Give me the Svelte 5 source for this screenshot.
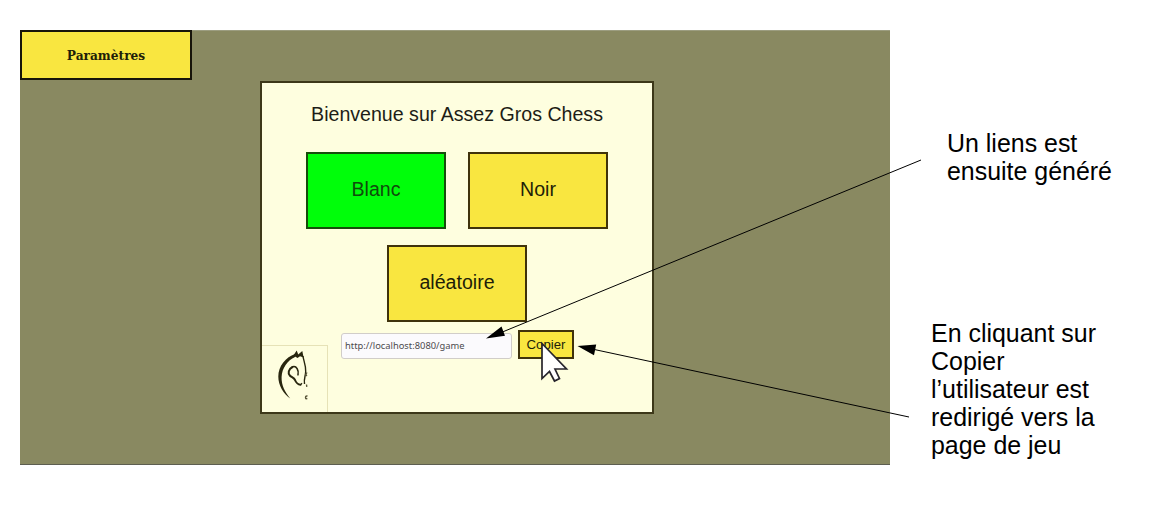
<script>
  let choice = $state('Blanc');
  const link = 'http://localhost:8080/game';
</script>

<main class="slide">
  <section class="screen">
    <button class="settings">Paramètres</button>
    <div class="dialog">
      <h1>Bienvenue sur Assez Gros Chess</h1>
      <div class="choices">
        {#each ['Blanc', 'Noir', 'aléatoire'] as name}
          <button class="choice" class:selected={choice === name} onclick={() => (choice = name)}>{name}</button>
        {/each}
      </div>
      <div class="share">
        <div class="link"><span>{link}</span></div>
        <button class="copy">Copier</button>
      </div>
      <div class="logo">
        <svg viewBox="0 0 66 66" width="66" height="66">
          <path d="M33 8C24 11 16.300 20 16.300 30.500c0 9 5 17 11.900 22C23 46 19.300 39.500 19.600 31 20 22 25.500 14.500 33 11z" fill="#28260f" />
          <path d="M30 11.500l4.700-7 1.500 4 4.100-3.500 1.300 6.500-3.600-1.300-2.500 1.800-2-1.300z" fill="#28260f" />
          <path d="M41 10c.3 4 3 9 2.700 15.500-.2 5-2 7-1.200 12.500" fill="none" stroke="#28260f" stroke-width="1.400" />
          <path d="M30.500 20.800c4-1.500 6.500 3.500 5.500 8" fill="none" stroke="#28260f" stroke-width="1.600" stroke-linecap="round" />
          <path d="M30.500 21c-4 2.200-5 6-2.500 8.700 1.500 1.600 4 2 5 4.300 1 2.500 2 4.500 5.500 4.700" fill="none" stroke="#28260f" stroke-width="2" stroke-linecap="round" />
          <path d="M38.500 38.800l1.500-1.600" stroke="#28260f" stroke-width="1.200" />
          <path d="M45 26.500l-1.200 2 1 1.500M44.500 38.500l.3 2.300M45.500 50c-2-.3-2.300 1.200-1.700 2.600l1.500.2" fill="none" stroke="#5a573b" stroke-width="1.400" />
        </svg>
      </div>
    </div>
  </section>
  <aside class="notes">
    <p class="first">Un liens est<br />ensuite généré</p>
    <p class="second">En cliquant sur<br />Copier<br />l’utilisateur est<br />redirigé vers la<br />page de jeu</p>
  </aside>
  <svg class="overlay" viewBox="0 0 1150 524" width="1150" height="524">
    <path d="M542 343.500V378.500L549.500 371.500 554.500 381 559.500 378.500 555 369H566.500Z" fill="#fff" stroke="#27252c" stroke-width="1.700" />
    <path d="M921 160L500 333M909 417L592 349" fill="none" stroke="#000" stroke-width="1" />
    <path d="M486 338.500L501.500 326.500 505 335.800ZM577.500 346L596.200 344.500 594 355.200Z" />
  </svg>
</main>

<style>
  :global(body) { background: #fff; }
  .slide {
    position: relative;
    display: flex;
    box-sizing: border-box;
    width: 1150px;
    height: 524px;
    padding-top: 30px;
    padding-left: 20px;
    overflow: hidden;
    font-family: "Liberation Sans", Arial, sans-serif;
  }
  button { font-family: inherit; color: #211e08; background: #f9e640; padding: 0; box-sizing: border-box; border: 2px solid #3f320b; border-radius: 0; }
  .screen {
    display: flex;
    align-items: flex-start;
    box-sizing: border-box;
    flex: none;
    width: 869.500px;
    height: 434.500px;
    background: #898961;
    border-top: 1px solid #9c9d80;
    border-bottom: 1.500px solid #5d5e50;
  }
  .settings { width: 172px; height: 50px; margin-top: -1px; padding-top: 1px; border-color: #17140a; font: bold 12.200px "DejaVu Serif", serif; }
  .dialog {
    display: grid;
    grid-template-columns: 66px 1fr 66px;
    grid-template-rows: 70px 177px 1fr;
    box-sizing: border-box;
    width: 394px;
    height: 333px;
    margin: 50px 0 0 68px;
    background: #fefedf;
    border: 2px solid #3d3819;
  }
  h1 { grid-column: 1 / 4; margin: 19px 0 0; font-size: 19.600px; line-height: 24px; font-weight: 400; text-align: center; color: #1d1d16; }
  .choices { grid-column: 1 / 4; display: flex; flex-wrap: wrap; justify-content: center; align-content: flex-start; gap: 16px 22px; margin-top: -1px; padding: 0 38px; }
  .choice { width: 140px; height: 77px; padding-bottom: 2px; font-size: 19.600px; }
  .choice.selected { background: #00fe0a; color: #104c0c; border-color: #174c0b; }
  .share { grid-column: 2 / 4; grid-row: 3; display: flex; align-items: flex-start; gap: 6px; padding-left: 13px; }
  .link { box-sizing: border-box; width: 171px; height: 26px; margin-top: 3px; padding: 0 0 2px 3px; display: flex; align-items: center; border: 1px solid #d1cdc9; border-radius: 3px; background: #fbfafd; font: 9.350px "Noto Sans", sans-serif; color: #4c4a4d; }
  .copy { width: 56px; height: 29px; font-size: 13.200px; }
  .logo { grid-column: 1; grid-row: 3; align-self: end; box-sizing: border-box; width: 66px; height: 67px; border: solid #e6e2b7; border-width: 1px 1px 0 0; }
  .logo svg { display: block; }
  .notes { font-size: 24.950px; line-height: 28px; color: #000; white-space: nowrap; }
  p { margin: 0; }
  .first { margin: 99px 0 0 57.500px; }
  .second { margin: 134px 0 0 41.500px; }
  .overlay { position: absolute; top: 0; left: 0; pointer-events: none; }
</style>
